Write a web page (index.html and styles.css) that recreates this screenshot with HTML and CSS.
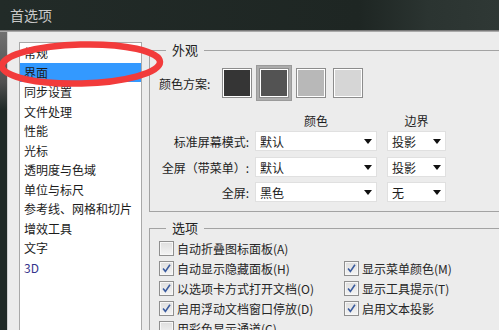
FILE: index.html
```html
<!DOCTYPE html>
<html lang="zh-cn">
<head>
    <meta charset="UTF-8">
    <title>首选项</title>
    <link rel="stylesheet" href="styles.css">
</head>
<body>

    <div class="window">
        <!--标题栏-->
        <div class="titlebar">首选项</div>

        <div class="main">
            <div class="edge"></div>

            <div class="dialog">
                <!--左侧列表-->
                <ul class="nav">
                    <li>常规</li>
                    <li class="on">界面</li>
                    <li>同步设置</li>
                    <li>文件处理</li>
                    <li>性能</li>
                    <li>光标</li>
                    <li>透明度与色域</li>
                    <li>单位与标尺</li>
                    <li>参考线、网格和切片</li>
                    <li>增效工具</li>
                    <li>文字</li>
                    <li class="blue">3D</li>
                </ul>

                <!--右侧设置-->
                <div class="panels">
                    <fieldset class="group look">
                        <legend>外观</legend>
                        <div class="scheme">
                            <span class="scheme-label">颜色方案:</span>
                            <div class="swatches">
                                <div class="swatch"><i class="c1"></i></div>
                                <div class="swatch sel"><i class="c2"></i></div>
                                <div class="swatch"><i class="c3"></i></div>
                                <div class="swatch"><i class="c4"></i></div>
                            </div>
                        </div>

                        <div class="head">
                            <span class="row-label"></span>
                            <span class="head-wide">颜色</span>
                            <span class="head-narrow">边界</span>
                        </div>
                        <div class="row">
                            <span class="row-label">标准屏幕模式:</span>
                            <div class="select wide"><span>默认</span><b class="caret"></b></div>
                            <div class="select narrow"><span>投影</span><b class="caret"></b></div>
                        </div>
                        <div class="row r2">
                            <span class="row-label">全屏（带菜单）:</span>
                            <div class="select wide"><span>默认</span><b class="caret"></b></div>
                            <div class="select narrow"><span>投影</span><b class="caret"></b></div>
                        </div>
                        <div class="row">
                            <span class="row-label">全屏:</span>
                            <div class="select wide"><span>黑色</span><b class="caret"></b></div>
                            <div class="select narrow"><span>无</span><b class="caret"></b></div>
                        </div>
                    </fieldset>

                    <fieldset class="group options">
                        <legend>选项</legend>
                        <div class="checks">
                            <label class="check"><span class="box"></span>自动折叠图标面板(A)</label>
                            <span></span>
                            <label class="check"><span class="box on"><svg viewBox="0 0 15 15"><path d="M3.5 7.5 L6.2 10.8 L11.5 3.2"/></svg></span>自动显示隐藏面板(H)</label>
                            <label class="check"><span class="box on"><svg viewBox="0 0 15 15"><path d="M3.5 7.5 L6.2 10.8 L11.5 3.2"/></svg></span>显示菜单颜色(M)</label>
                            <label class="check"><span class="box on"><svg viewBox="0 0 15 15"><path d="M3.5 7.5 L6.2 10.8 L11.5 3.2"/></svg></span>以选项卡方式打开文档(O)</label>
                            <label class="check"><span class="box on"><svg viewBox="0 0 15 15"><path d="M3.5 7.5 L6.2 10.8 L11.5 3.2"/></svg></span>显示工具提示(T)</label>
                            <label class="check"><span class="box on"><svg viewBox="0 0 15 15"><path d="M3.5 7.5 L6.2 10.8 L11.5 3.2"/></svg></span>启用浮动文档窗口停放(D)</label>
                            <label class="check"><span class="box on"><svg viewBox="0 0 15 15"><path d="M3.5 7.5 L6.2 10.8 L11.5 3.2"/></svg></span>启用文本投影</label>
                            <label class="check"><span class="box"></span>用彩色显示通道(C)</label>
                        </div>
                    </fieldset>
                </div>
            </div>
        </div>

        <!--红色圈注-->
        <svg class="mark" width="499" height="330" viewBox="0 0 499 330">
            <ellipse cx="81" cy="64" rx="79" ry="19.5" transform="rotate(-1.5 81 64)"/>
        </svg>
    </div>

</body>
</html>
```

FILE: styles.css
```css
*{margin:0;padding:0;box-sizing:border-box;}
li{list-style: none}

html,body{
    width: 499px;
    height: 330px;
    overflow: hidden;
}
body{
    font-family: "Noto Sans CJK SC", "Noto Sans", sans-serif;
    font-size: 12px;
    color: #1c1c1c;
    background: #ececec;
}

.window{
    position: relative;
    width: 499px;
    height: 330px;
    overflow: hidden;
    display: flex;
    flex-direction: column;
}

/*标题栏*/
.titlebar{
    flex: none;
    height: 32px;
    padding-left: 10px;
    line-height: 30px;
    font-size: 14px;
    color: #c9c9c9;
    background: linear-gradient(to right, #222b28 0%, #1e2623 72%, #2b3431 86%, #2f3835 100%);
    border-bottom: 1px solid #a9a9a9;
    box-shadow: inset 0 -1px 0 #7a7a7a;
}

.main{
    flex: 1;
    min-height: 0;
    display: flex;
}
.edge{
    flex: none;
    width: 7px;
    background: linear-gradient(#707070, #505050 50px, #1f2926 78px, #1f2926);
}
.dialog{
    flex: 1;
    display: flex;
    padding: 10px 0 0 11px;
    border-left: 1px solid #cfcfcf;
    background: #ececec;
}

/*左侧列表*/
.nav{
    flex: none;
    width: 123px;
    background: #fff;
    border: 1px solid #a9a9a9;
    border-bottom: none;
}
.nav li{
    height: 19.5px;
    padding-left: 4px;
    line-height: 19.5px;
    white-space: nowrap;
}
.nav li.on{
    background-color: #3399ff;
}
.nav li.blue{
    color: #34348c;
}

/*右侧*/
.panels{
    flex: none;
    width: 370px;
    margin-left: 7px;
}
.group{
    border: 1px solid #a3a3a3;
    min-width: 0;
}
.group legend{
    margin-left: 16px;
    padding: 0 6px;
    font-size: 13px;
    line-height: 16px;
    color: #222;
}

.look{
    padding-bottom: 9px;
}
.scheme{
    display: flex;
    align-items: center;
    padding: 7px 0 0 9px;
}
.scheme-label{
    width: 60px;
}
.swatches{
    display: flex;
    gap: 1px;
}
.swatch{
    width: 36px;
    height: 36px;
    padding: 3px;
}
.swatch.sel{
    background: #acacac;
    box-shadow: inset 0 0 0 1px #9a9a9a;
}
.swatch i{
    display: block;
    width: 30px;
    height: 30px;
    border: 1px solid #8c8c8c;
    box-shadow: inset 0 0 0 1px #fff;
}
.swatch i.c1{background: #353535;}
.swatch i.c2{background: #535353;}
.swatch i.c3{background: #b8b8b8;}
.swatch i.c4{background: #d6d6d6;}

.head, .row{
    display: flex;
    align-items: center;
}
.head{
    height: 16px;
    margin-top: 11px;
}
.row{
    height: 20px;
    margin-top: 5px;
}
.head + .row{
    margin-top: 3px;
}
.row.r2{
    margin-top: 6px;
}
.row-label{
    flex: none;
    width: 99px;
    text-align: right;
    white-space: nowrap;
}
.head-wide{
    width: 122px;
    margin-left: 6px;
    text-align: center;
}
.head-narrow{
    width: 59px;
    margin-left: 10px;
    text-align: center;
}

.select{
    display: flex;
    align-items: center;
    justify-content: space-between;
    height: 20px;
    padding: 0 4px;
    background: #fff;
    border: 1px solid #e0e0e0;
}
.select.wide{
    width: 122px;
    margin-left: 6px;
}
.select.narrow{
    width: 59px;
    margin-left: 10px;
}
.caret{
    width: 0;
    height: 0;
    border-left: 4.5px solid transparent;
    border-right: 4.5px solid transparent;
    border-top: 5px solid #111;
}

/*选项*/
.options{
    margin-top: 8px;
    height: 200px;
}
.checks{
    display: grid;
    grid-template-columns: 185px auto;
    grid-auto-rows: 20px;
    padding: 2px 0 0 9px;
}
.check{
    display: flex;
    align-items: center;
    gap: 3px;
    white-space: nowrap;
    color: #262626;
}
.box{
    flex: none;
    width: 15px;
    height: 15px;
    border: 1px solid #8f8f8f;
    background: linear-gradient(#dedede, #f4f4f4);
    box-shadow: inset 0 0 0 1px #f7f7f7;
}
.box svg{
    display: block;
    width: 13px;
    height: 13px;
}
.box svg path{
    fill: none;
    stroke: #3a5b9e;
    stroke-width: 1.8;
}

/*红圈*/
.mark{
    position: absolute;
    left: 0;
    top: 0;
    pointer-events: none;
}
.mark ellipse{
    fill: none;
    stroke: #f23b3b;
    stroke-width: 6.5;
}
```
